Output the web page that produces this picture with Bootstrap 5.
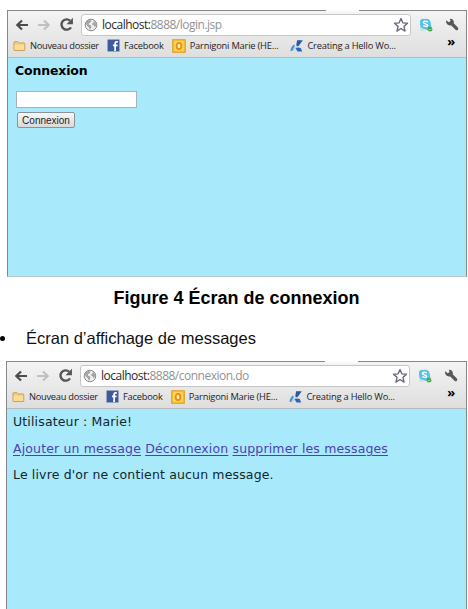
<!DOCTYPE html>
<html lang="fr">

<head>
    <meta charset="UTF-8">
    <meta name="viewport" content="width=device-width, initial-scale=1">
    <title>Écrans du livre d'or</title>
    <link href="https://cdn.jsdelivr.net/npm/bootstrap@5.3.2/dist/css/bootstrap.min.css" rel="stylesheet">
    <style>
        body {
            background-color: #fff;
            color: #000;
            font-family: "Liberation Sans", sans-serif;
            height: 609px;
        }

        svg {
            display: block;
            flex: none;
        }

        main {
            padding-top: 10px;
        }

        .fenetre {
            width: 460px;
            height: 267px;
            margin-left: 7px;
            border: 1px solid #85898c;
            border-bottom: 1px solid #b5c6cc;
            background-color: #a8eafc;
        }

        .fenetre-messages {
            width: 461px;
            height: 248px;
            margin-left: 6px;
            border-bottom: 0;
        }

        /* partie claire de la bordure, sous l'onglet */
        .onglet {
            top: -1px;
            left: 318px;
            width: 33px;
            height: 2px;
            background-color: #fafafa;
        }

        .chrome-haut {
            height: 47px;
            background: linear-gradient(#f4f4f4, #dedede);
            border-bottom: 1px solid #b3bcc0;
            font-family: "Open Sans", "Noto Sans", sans-serif;
        }

        .navigation {
            height: 25px;
            padding: 2px 0 0 7px;
        }

        .suivant {
            transform: scaleX(-1);
        }

        .adresse {
            width: 330px;
            height: 22px;
            margin-left: 7px;
            padding: 0 1px 0 2px;
            border: 1px solid #c6c6c6;
            border-radius: 3px;
            background-color: #fff;
            font-size: 12px;
            letter-spacing: -.5px;
            line-height: 18px;
            color: #929292;
        }

        .adresse b {
            font-weight: 400;
            color: #2b2b2b;
        }

        .favoris {
            height: 19px;
            padding-left: 5px;
            font-size: 9.3px;
            letter-spacing: -.2px;
            line-height: 14px;
            color: #1d1d1d;
        }

        .favoris span {
            margin-left: 4px;
            white-space: nowrap;
        }

        .favoris .dossier {
            letter-spacing: -.27px;
        }

        .favoris .didacticiel {
            margin-left: 3px;
        }

        .suite {
            margin: -9px 11px 0 auto;
            font-size: 13px;
            color: #000;
        }

        .page-web {
            padding: 5px 7px;
            font-family: "DejaVu Sans", sans-serif;
            font-size: 12.5px;
            letter-spacing: .15px;
            line-height: 16px;
            color: #12262c;
        }

        .page-web h1 {
            margin: 0 0 12px;
            font-size: 12.5px;
            letter-spacing: -.15px;
            line-height: 16px;
            font-weight: 700;
            color: #000;
        }

        .champ {
            width: 121px;
            height: 17px;
            margin-left: 1px;
            border: 1px solid #a5b4bb;
            border-radius: 0;
            padding: 0 2px;
            background-color: #fff;
            font-size: 10px;
        }

        .bouton {
            width: 58px;
            height: 16px;
            margin: 4px 0 0 2px;
            padding: 0;
            border: 1px solid #86959b;
            border-radius: 2px;
            background: linear-gradient(#f7f7f7, #d9d9d9);
            font-family: "Liberation Sans", sans-serif;
            font-size: 10px;
            line-height: 13px;
            color: #222;
        }

        .page-web p {
            margin: 0 0 10.5px;
            white-space: nowrap;
        }

        .page-web a {
            color: #4f3fb0;
            text-underline-offset: 2px;
        }

        .fenetre-messages .page-web {
            padding-left: 6px;
        }

        .legende {
            margin: 9px 0 0;
            padding-left: 5px;
            font-size: 18px;
            line-height: 24px;
            font-weight: 700;
        }

        .puce {
            width: 5px;
            height: 5px;
            margin-right: 21px;
            background-color: #000;
        }

        .element {
            height: 24px;
            margin: 16px 0 11px;
            font-size: 16.5px;
            line-height: 24px;
            color: #111;
        }
    </style>
</head>

<body class="overflow-hidden">
    <svg width="0" height="0" class="position-absolute">
        <defs>
            <symbol id="retour" viewBox="0 0 14 12">
                <path d="M13 6H3M7 1.5 2.3 6 7 10.5" fill="none" stroke="currentColor" stroke-width="2.2" />
            </symbol>
            <symbol id="recharger" viewBox="0 0 14 14">
                <path d="M11.2 9.6A4.8 4.8 0 1 1 10.3 3.4" fill="none" stroke="#555" stroke-width="2.2" />
                <path d="M13 .8v6H7z" fill="#555" />
            </symbol>
            <symbol id="globe" viewBox="0 0 14 14">
                <circle cx="7" cy="7" r="5.8" fill="#eee" stroke="#8b8b8b" />
                <path d="M2 4.2 4.6 2l2.8.3-.5 1.9-2 .9.2 1.6 2 .8.3 1.8-1.6 2.7-1-2.8L2.4 7zM9 2.2l2.5 2.1.8 3-1.6 2-1.1-2-1.4-.5.3-1.8 1.4-.7z" fill="#a4a4a4" />
            </symbol>
            <symbol id="etoile" viewBox="0 0 14 14">
                <path d="m7 1.3 1.6 3.8 4.1.4-3.1 2.7.9 4.1L7 10.1l-3.5 2.2.9-4.1-3.1-2.7 4.1-.4z" fill="#fff" stroke="#69697d" stroke-width="1.2" stroke-linejoin="round" />
            </symbol>
            <symbol id="skype" viewBox="0 0 14 14">
                <path d="M1 2.5Q3-.2 5.5 1 10-.2 11.5 4q1 3 .7 6Q9 13 6 11.2 1 11 1 6.5z" fill="#58c2e9" />
                <path d="M8.9 3.8Q5 2.2 4.4 4.2c-.4 2 4.5 1.2 4.3 3.3Q8 9.3 4.3 7.7" fill="none" stroke="#fff" stroke-width="1.4" />
                <path d="M1 8.5 6 13H1.6z" fill="#c7dfe8" />
                <circle cx="11" cy="11.2" r="2.4" fill="#45a846" />
                <path d="m10 11.2.8.8 1.3-1.5" fill="none" stroke="#d9f5d5" stroke-width=".7" />
            </symbol>
            <symbol id="cle" viewBox="0 0 14 14">
                <path d="M1.3 2.3 3.7 4.3 5.6 3 4.8.9q3-.3 3.9 2.1.3 1.2 0 2.2l4.2 4.2q.9 1.2 0 2.3-1.2 1-2.4 0L6.3 7.4Q2.6 8.2 1.3 5.1.8 3.8 1.3 2.3z" fill="#585858" />
            </symbol>
            <symbol id="dossier" viewBox="0 0 14 12">
                <path d="M1 10.2V2.3q0-1 1-1h3.3l1.2 1.4h5.2q1 0 1 1v6.5q0 .7-.7.7H1.7q-.7 0-.7-.7z" fill="#f6ca71" stroke="#bd9146" stroke-width=".8" />
                <path d="M1.7 4.5H12v5.6H1.7z" fill="#fbdd98" />
            </symbol>
            <symbol id="facebook" viewBox="0 0 12 12">
                <path d="M.5.5h11v11H.5z" fill="#3c5a9e" />
                <path d="M10 2.6H8.8q-1.3 0-1.3 1.3V11M5.5 5.8h4.2" fill="none" stroke="#fff" stroke-width="1.6" />
            </symbol>
            <symbol id="outlook" viewBox="0 0 13 13">
                <path d="M.7.7h11.6v11.6H.7z" fill="#fbc630" stroke="#e19b18" />
                <path d="M2.2 2.2h8.6v8.6H2.2z" fill="#fdd766" />
                <ellipse cx="6.5" cy="6.5" rx="2.2" ry="2.9" fill="#fff3c9" stroke="#e78f0d" stroke-width="1.8" />
            </symbol>
            <symbol id="didacticiel" viewBox="0 0 14 14">
                <path d="M7.1 1.2h5.7L9 6.6q-.8 1-2 .4-1.3-.8-.5-2.2z" fill="#2859a5" />
                <path d="M3.8 5.5 5 6.8 2.2 12H.5q0-3.8 3.3-6.5z" fill="#4f91cc" />
                <path d="M5.3 9q2.8-1.2 5.5 0l1.4 3.4H7.6z" fill="#2d67b3" />
                <path d="m3 12 4-5" stroke="#a5cce8" />
            </symbol>
        </defs>
    </svg>

    <main class="d-flex flex-column">
        <section class="fenetre flex-shrink-0">
            <div class="chrome-haut position-relative">
                <div class="onglet position-absolute"></div>
                <div class="navigation d-flex align-items-center">
                    <svg width="14" height="12" color="#4c4c4c"><use href="#retour" /></svg>
                    <svg class="suivant ms-2" width="14" height="12" color="#c0c0c0"><use href="#retour" /></svg>
                    <svg class="ms-2" width="15" height="15"><use href="#recharger" /></svg>
                    <div class="adresse d-flex align-items-center">
                        <svg class="me-1" width="14" height="14"><use href="#globe" /></svg>
                        <div><b>localhost:</b>8888/login.jsp</div>
                        <svg class="ms-auto" width="16" height="16"><use href="#etoile" /></svg>
                    </div>
                    <svg class="ms-2" width="14" height="14"><use href="#skype" /></svg>
                    <svg class="ms-2 ps-1" width="18" height="14"><use href="#cle" /></svg>
                </div>
                <div class="favoris d-flex align-items-center">
                    <svg width="13" height="12"><use href="#dossier" /></svg><span class="dossier">Nouveau dossier</span>
                    <svg class="ms-2" width="13" height="13"><use href="#facebook" /></svg><span>Facebook</span>
                    <svg class="ms-2" width="14" height="14"><use href="#outlook" /></svg><span>Parnigoni Marie (HE...</span>
                    <svg class="ms-2 ps-1" width="18" height="14"><use href="#didacticiel" /></svg><span class="didacticiel">Creating a Hello Wo...</span>
                    <b class="suite">»</b>
                </div>
            </div>
            <div class="page-web">
                <h1>Connexion</h1>
                <form>
                    <input type="text" class="champ d-block" aria-label="Nom">
                    <button type="button" class="bouton d-block">Connexion</button>
                </form>
            </div>
        </section>

        <h2 class="legende text-center">Figure 4 Écran de connexion</h2>
        <div class="element d-flex align-items-center">
            <span class="puce rounded-circle"></span>Écran d’affichage de messages
        </div>

        <section class="fenetre fenetre-messages flex-shrink-0">
            <div class="chrome-haut position-relative">
                <div class="onglet position-absolute"></div>
                <div class="navigation d-flex align-items-center">
                    <svg width="14" height="12" color="#4c4c4c"><use href="#retour" /></svg>
                    <svg class="suivant ms-2" width="14" height="12" color="#c0c0c0"><use href="#retour" /></svg>
                    <svg class="ms-2" width="15" height="15"><use href="#recharger" /></svg>
                    <div class="adresse d-flex align-items-center">
                        <svg class="me-1" width="14" height="14"><use href="#globe" /></svg>
                        <div><b>localhost:</b>8888/connexion.do</div>
                        <svg class="ms-auto" width="16" height="16"><use href="#etoile" /></svg>
                    </div>
                    <svg class="ms-2" width="14" height="14"><use href="#skype" /></svg>
                    <svg class="ms-2 ps-1" width="18" height="14"><use href="#cle" /></svg>
                </div>
                <div class="favoris d-flex align-items-center">
                    <svg width="13" height="12"><use href="#dossier" /></svg><span class="dossier">Nouveau dossier</span>
                    <svg class="ms-2" width="13" height="13"><use href="#facebook" /></svg><span>Facebook</span>
                    <svg class="ms-2" width="14" height="14"><use href="#outlook" /></svg><span>Parnigoni Marie (HE...</span>
                    <svg class="ms-2 ps-1" width="18" height="14"><use href="#didacticiel" /></svg><span class="didacticiel">Creating a Hello Wo...</span>
                    <b class="suite">»</b>
                </div>
            </div>
            <div class="page-web">
                <p>Utilisateur : Marie!</p>
                <p><a href="#">Ajouter un message</a> <a href="#">Déconnexion</a> <a href="#">supprimer les messages</a></p>
                <p>Le livre d'or ne contient aucun message.</p>
            </div>
        </section>
    </main>

    <script src="https://cdn.jsdelivr.net/npm/bootstrap@5.3.2/dist/js/bootstrap.bundle.min.js"></script>
</body>

</html>
